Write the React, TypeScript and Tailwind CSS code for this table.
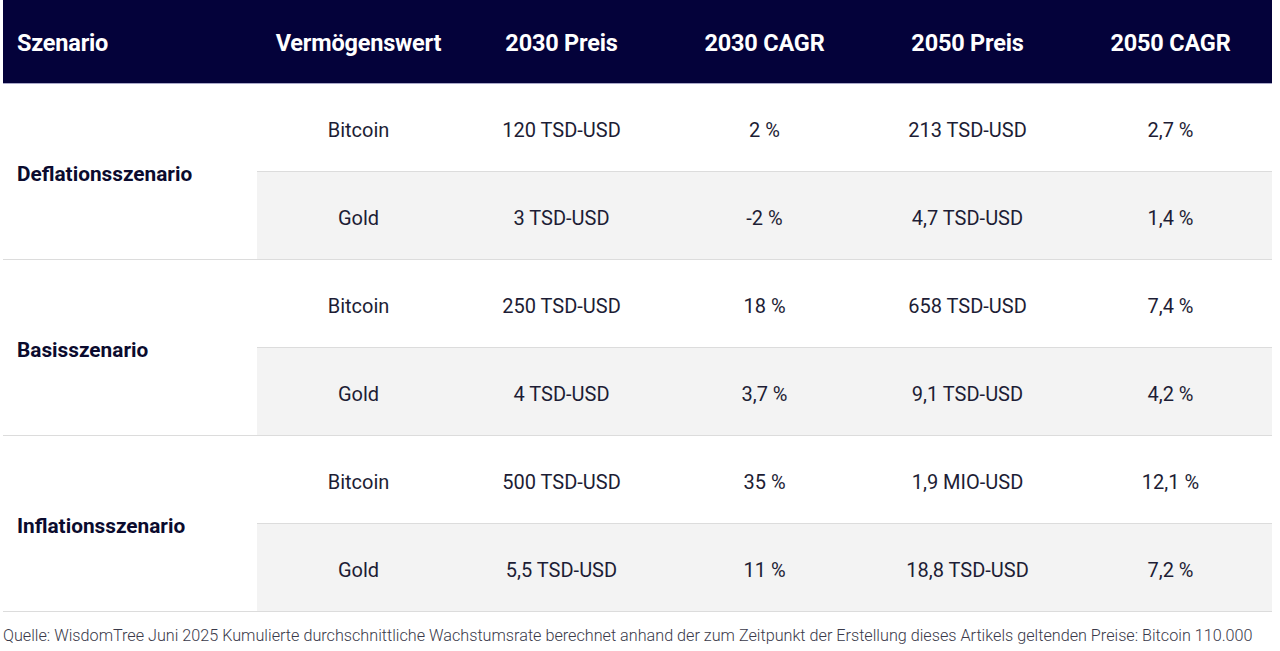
import React from "react";

const groups = [
  {
    name: "Deflationsszenario",
    rows: [
      ["Bitcoin", "120 TSD-USD", "2 %", "213 TSD-USD", "2,7 %"],
      ["Gold", "3 TSD-USD", "-2 %", "4,7 TSD-USD", "1,4 %"],
    ],
  },
  {
    name: "Basisszenario",
    rows: [
      ["Bitcoin", "250 TSD-USD", "18 %", "658 TSD-USD", "7,4 %"],
      ["Gold", "4 TSD-USD", "3,7 %", "9,1 TSD-USD", "4,2 %"],
    ],
  },
  {
    name: "Inflationsszenario",
    rows: [
      ["Bitcoin", "500 TSD-USD", "35 %", "1,9 MIO-USD", "12,1 %"],
      ["Gold", "5,5 TSD-USD", "11 %", "18,8 TSD-USD", "7,2 %"],
    ],
  },
];

const headers = ["Vermögenswert", "2030 Preis", "2030 CAGR", "2050 Preis", "2050 CAGR"];

export default function App() {
  return (
    <div
      className="w-[1280px] h-[651px] bg-white overflow-hidden"
      style={{ fontFamily: "Roboto, 'Liberation Sans', sans-serif" }}
    >
      <div className="ml-[3px] w-[1269px]">
        <div className="flex h-[84px] pt-[4px] bg-[#04023a] border-b border-[#a9a8c8] text-white font-bold text-[23.5px] tracking-[-0.2px]">
          <div className="w-[254px] flex items-center pl-[14px]">Szenario</div>
          <div className="flex-1 grid grid-cols-5">
            {headers.map((h) => (
              <div key={h} className="flex items-center justify-center">
                {h}
              </div>
            ))}
          </div>
        </div>
        {groups.map((g) => (
          <div key={g.name} className="flex border-b border-[#dcdcdc]">
            <div className="w-[254px] flex items-center pl-[14px] pt-[6px] font-bold text-[20.8px] text-[#0b0b2e]">
              {g.name}
            </div>
            <div className="flex-1 flex flex-col">
              {g.rows.map((r, i) => (
                <div
                  key={i}
                  className={
                    i === 0
                      ? "grid grid-cols-5 h-[88px] pt-[4px] bg-white border-b border-[#dcdcdc]"
                      : "grid grid-cols-5 h-[87px] pt-[4px] bg-[#f3f3f3]"
                  }
                >
                  {r.map((c, j) => (
                    <div
                      key={j}
                      className="flex items-center justify-center text-[20px] text-[#1d1d35]"
                    >
                      {c}
                    </div>
                  ))}
                </div>
              ))}
            </div>
          </div>
        ))}
      </div>
      <div className="pl-[3px] pt-[12px] text-[16.2px] font-light text-[#3a3a4a] whitespace-nowrap">
        Quelle: WisdomTree Juni 2025 Kumulierte durchschnittliche Wachstumsrate berechnet anhand der zum Zeitpunkt der Erstellung dieses Artikels geltenden Preise: Bitcoin 110.000
      </div>
    </div>
  );
}
